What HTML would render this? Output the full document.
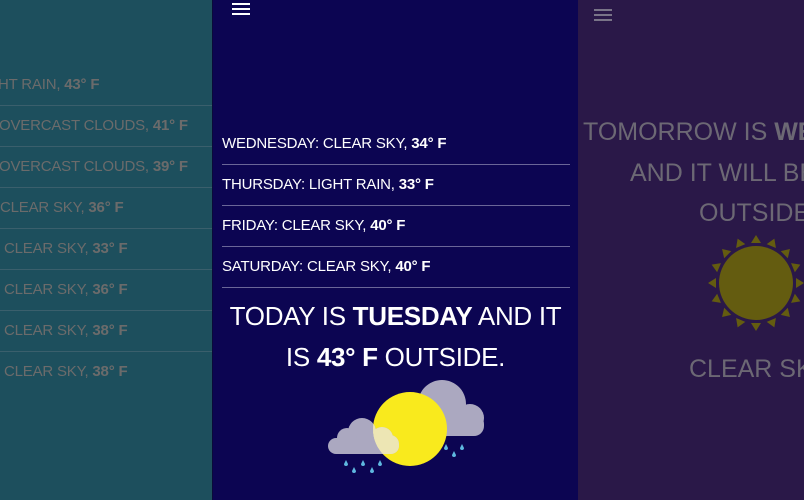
<!DOCTYPE html>
<html><head><meta charset="utf-8"><style>
*{margin:0;padding:0;box-sizing:border-box}
body{width:804px;height:500px;overflow:hidden;position:relative;font-family:"Liberation Sans",sans-serif;background:#0c0552}
.p{position:absolute;top:0;height:500px;overflow:hidden}
#l{left:0;width:214px;background:#1d4f5d;border-right:2px solid #0a0a3a}
#m{left:213px;width:365px;background:#0c0552}
#r{left:578px;width:226px;background:#2a1848}
.row{position:absolute;white-space:nowrap;font-size:15px;letter-spacing:-0.2px}
.row b{font-weight:bold}
.ll{position:absolute;left:0;width:213px;height:1px;background:#3a5f6c}
.ml{position:absolute;left:9px;width:348px;height:1px;background:#6a6698}
.lt{color:#6b6b6b}
.mt{color:#fff}
.big{position:absolute;left:0;width:365px;text-align:center;color:#fff;font-size:26px;line-height:41px;letter-spacing:-0.3px}
.rb{position:absolute;left:5px;width:400px;color:#6c6874;font-size:25px;line-height:40px;white-space:nowrap}
.ham{position:absolute;width:18px;height:2px}
</style></head><body>
<div class="p" id="l">
<div class="row lt" style="left:-2px;top:76px">HT RAIN, <b>43° F</b></div>
<div class="ll" style="top:105px"></div>
<div class="row lt" style="left:-1px;top:117px">OVERCAST CLOUDS, <b>41° F</b></div>
<div class="ll" style="top:146px"></div>
<div class="row lt" style="left:-1px;top:158px">OVERCAST CLOUDS, <b>39° F</b></div>
<div class="ll" style="top:187px"></div>
<div class="row lt" style="left:0px;top:199px">CLEAR SKY, <b>36° F</b></div>
<div class="ll" style="top:228px"></div>
<div class="row lt" style="left:4px;top:240px">CLEAR SKY, <b>33° F</b></div>
<div class="ll" style="top:269px"></div>
<div class="row lt" style="left:4px;top:281px">CLEAR SKY, <b>36° F</b></div>
<div class="ll" style="top:310px"></div>
<div class="row lt" style="left:4px;top:322px">CLEAR SKY, <b>38° F</b></div>
<div class="ll" style="top:351px"></div>
<div class="row lt" style="left:4px;top:363px">CLEAR SKY, <b>38° F</b></div>
</div>
<div class="p" id="m">
<div class="ham" style="left:19px;top:3px;background:#fff"></div>
<div class="ham" style="left:19px;top:8px;background:#fff"></div>
<div class="ham" style="left:19px;top:13px;background:#fff"></div>
<div class="row mt" style="left:9px;top:135px">WEDNESDAY: CLEAR SKY, <b>34° F</b></div>
<div class="ml" style="top:164px"></div>
<div class="row mt" style="left:9px;top:176px">THURSDAY: LIGHT RAIN, <b>33° F</b></div>
<div class="ml" style="top:205px"></div>
<div class="row mt" style="left:9px;top:217px">FRIDAY: CLEAR SKY, <b>40° F</b></div>
<div class="ml" style="top:246px"></div>
<div class="row mt" style="left:9px;top:258px">SATURDAY: CLEAR SKY, <b>40° F</b></div>
<div class="ml" style="top:287px"></div>
<div class="big" style="top:296px">TODAY IS <b>TUESDAY</b> AND IT<br>IS <b>43° F</b> OUTSIDE.</div>
<svg style="position:absolute;left:107px;top:370px" width="180" height="130" viewBox="0 0 180 130">
<defs>
<clipPath id="sc"><circle cx="90" cy="59" r="37"/></clipPath>
<g id="lc">
<circle cx="42" cy="62" r="14"/><circle cx="27" cy="68" r="10"/><circle cx="62" cy="68" r="11"/><circle cx="70" cy="74" r="9"/><rect x="8" y="68" width="71" height="16" rx="8"/>
</g>
</defs>
<g fill="#aba8c0">
<circle cx="122" cy="34" r="24"/><circle cx="150" cy="48" r="14"/><circle cx="108" cy="46" r="14"/><rect x="100" y="44" width="64" height="22" rx="10"/>
</g>
<g fill="#5fb8e0">
<path d="M126 74 l-2 4 a2 2 0 0 0 4 0z"/><path d="M134 81 l-2 4 a2 2 0 0 0 4 0z"/><path d="M142 74 l-2 4 a2 2 0 0 0 4 0z"/>
<path d="M26 90 l-2 4 a2 2 0 0 0 4 0z"/><path d="M34 97 l-2 4 a2 2 0 0 0 4 0z"/><path d="M43 90 l-2 4 a2 2 0 0 0 4 0z"/><path d="M52 97 l-2 4 a2 2 0 0 0 4 0z"/><path d="M60 90 l-2 4 a2 2 0 0 0 4 0z"/>
</g>
<circle cx="90" cy="59" r="37" fill="#f9ea1d"/>
<use href="#lc" fill="#aba8c0"/>
<g clip-path="url(#sc)"><use href="#lc" fill="#ede6b4"/></g>
</svg>
</div>
<div class="p" id="r">
<div class="ham" style="left:16px;top:9px;background:#7a7488"></div>
<div class="ham" style="left:16px;top:14px;background:#7a7488"></div>
<div class="ham" style="left:16px;top:19px;background:#7a7488"></div>
<div class="rb" style="top:112px">TOMORROW IS <b>WEDNESDAY</b></div>
<div class="rb" style="top:153px;left:52px">AND IT WILL BE</div>
<div class="rb" style="top:193px;left:121px">OUTSIDE.</div>
<svg style="position:absolute;left:125px;top:233px" width="110" height="100" viewBox="0 0 110 100">
<circle cx="53" cy="50" r="37" fill="#645c10"/>
<g fill="#645c10">
<polygon points="53,2 58,10 48,10"/>
<polygon points="53,2 58,10 48,10" transform="rotate(22.5 53 50)"/>
<polygon points="53,2 58,10 48,10" transform="rotate(45 53 50)"/>
<polygon points="53,2 58,10 48,10" transform="rotate(67.5 53 50)"/>
<polygon points="53,2 58,10 48,10" transform="rotate(90 53 50)"/>
<polygon points="53,2 58,10 48,10" transform="rotate(112.5 53 50)"/>
<polygon points="53,2 58,10 48,10" transform="rotate(135 53 50)"/>
<polygon points="53,2 58,10 48,10" transform="rotate(157.5 53 50)"/>
<polygon points="53,2 58,10 48,10" transform="rotate(180 53 50)"/>
<polygon points="53,2 58,10 48,10" transform="rotate(202.5 53 50)"/>
<polygon points="53,2 58,10 48,10" transform="rotate(225 53 50)"/>
<polygon points="53,2 58,10 48,10" transform="rotate(247.5 53 50)"/>
<polygon points="53,2 58,10 48,10" transform="rotate(270 53 50)"/>
<polygon points="53,2 58,10 48,10" transform="rotate(292.5 53 50)"/>
<polygon points="53,2 58,10 48,10" transform="rotate(315 53 50)"/>
<polygon points="53,2 58,10 48,10" transform="rotate(337.5 53 50)"/>
</g>
</svg>
<div class="rb" style="top:349px;left:111px">CLEAR SKY</div>
</div>
</body></html>
